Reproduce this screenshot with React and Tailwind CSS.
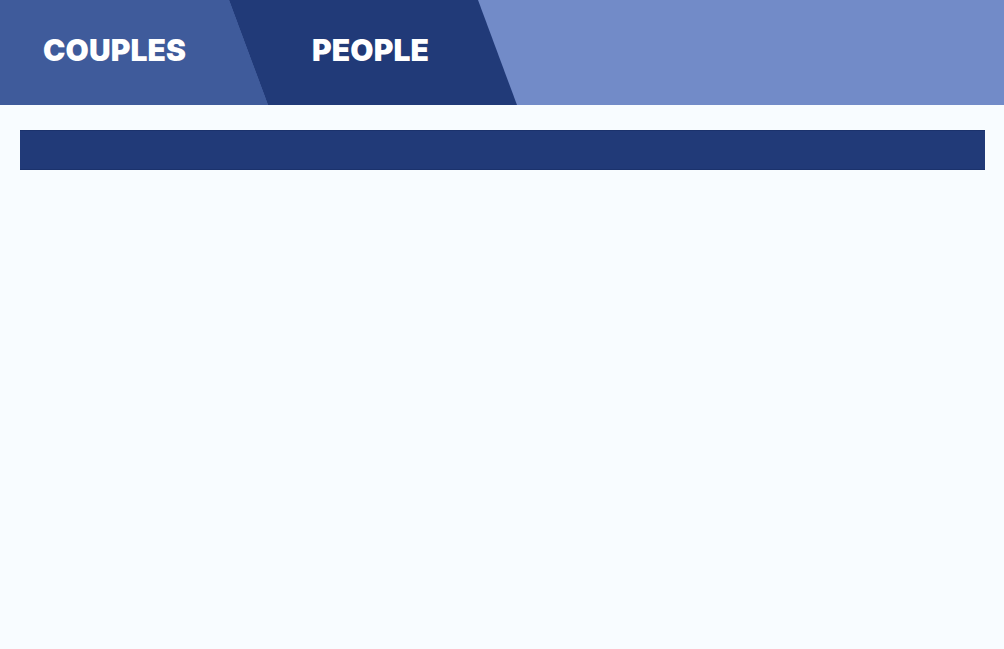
import React, { useState } from "react";

const tabs = [
  {
    label: "COUPLES",
    className:
      "w-[268px] pl-[43px] bg-[#3f5b9b] [clip-path:polygon(0_0,229px_0,268px_100%,0_100%)]",
  },
  {
    label: "PEOPLE",
    className:
      "-ml-[39px] w-[288px] pl-[83px] bg-[#213a78] [clip-path:polygon(0_0,249px_0,288px_100%,39px_100%)]",
  },
];

const App = () => {
  const [active, setActive] = useState("PEOPLE");

  return (
    <div className="min-h-[649px] w-full bg-[#f8fcff] font-['Inter','Roboto',sans-serif]">
      {/* tab header */}
      <div className="flex h-[105px] w-full bg-[#728bc8]">
        {tabs.map((tab) => (
          <button
            key={tab.label}
            onClick={() => setActive(tab.label)}
            className={`flex h-full items-center pb-[5px] text-left text-[30px] font-black tracking-[0.1px] text-white ${tab.className}`}
          >
            {tab.label}
          </button>
        ))}
      </div>

      <div className="pl-[20px] pr-[19px] pt-[25px]">
        <div className="h-[40px] w-full border-y border-[#1b326c] bg-[#213a78]" />
      </div>
    </div>
  );
};

export default App;
